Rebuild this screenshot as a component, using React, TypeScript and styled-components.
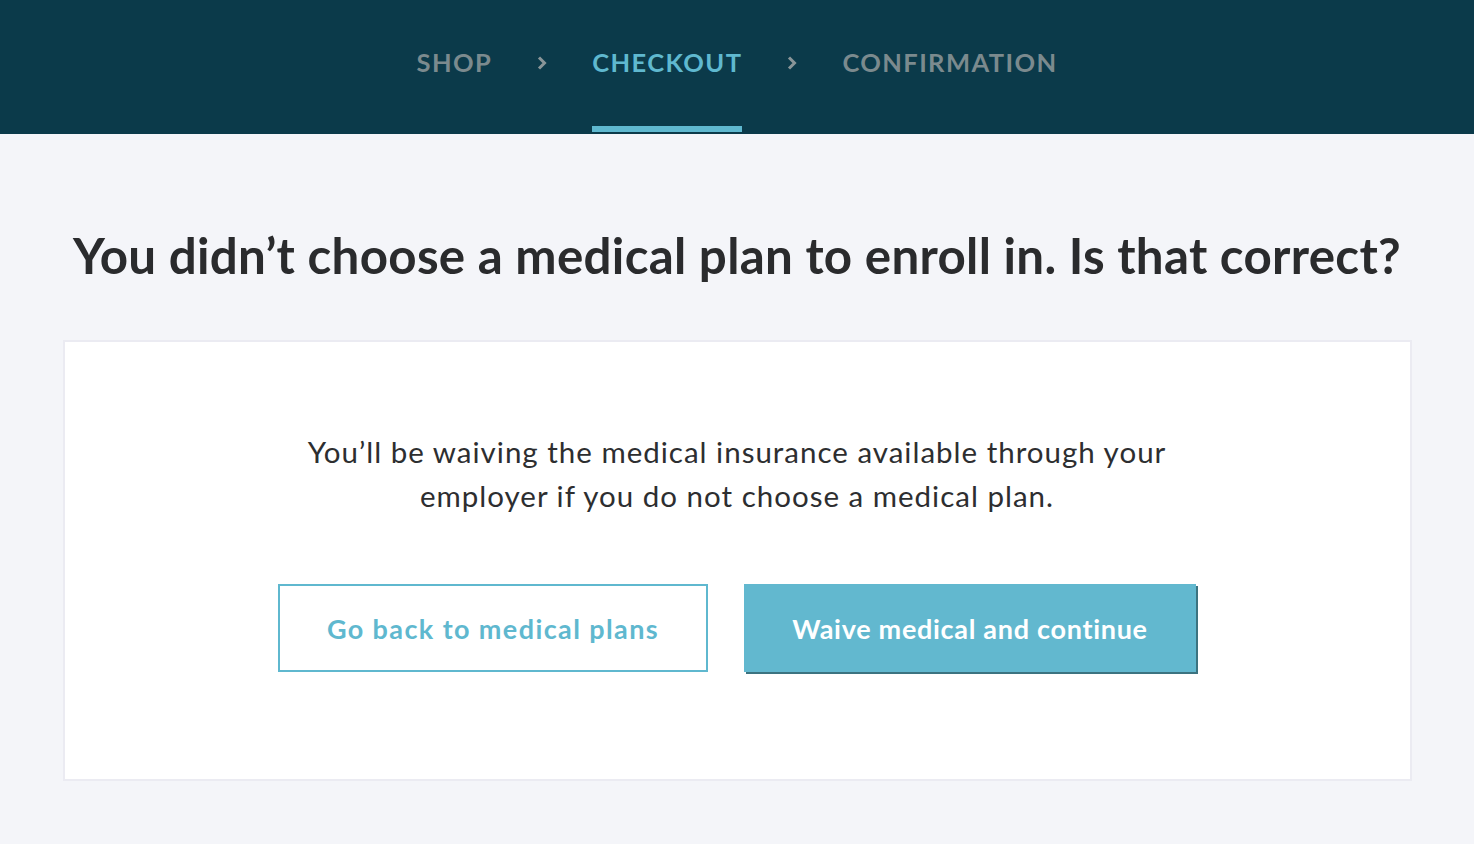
import styled, { createGlobalStyle } from 'styled-components';

const GlobalStyle = createGlobalStyle`
  html, body {
    margin: 0;
    padding: 0;
    background: #f4f5f9;
    font-family: 'Lato', 'Open Sans', sans-serif;
  }
`;

const Page = styled.div`
  min-height: 844px;
  background: #f4f5f9;
`;

const Header = styled.header`
  height: 134px;
  background: #0b3a4a;
  display: flex;
  justify-content: center;
  align-items: stretch;
`;

const Steps = styled.nav`
  display: flex;
  align-items: stretch;
  gap: 45px;
`;

const Step = styled.div<{ $active?: boolean }>`
  display: flex;
  align-items: flex-start;
  padding-top: 47px;
  box-sizing: border-box;
  font-size: 25.5px;
  font-weight: 700;
  letter-spacing: 1.4px;
  color: ${(p) => (p.$active ? '#5fb8cf' : '#7b8a8e')};
  border-bottom: 6px solid ${(p) => (p.$active ? '#5fb8cf' : 'transparent')};
  margin-bottom: 2px;
`;

const Chevron = styled.div`
  display: flex;
  align-items: flex-start;
  padding-top: 55px;
  color: #8a9598;
`;

const Main = styled.main`
  display: flex;
  flex-direction: column;
  align-items: center;
  padding-top: 92px;
`;

const Title = styled.h1`
  margin: 0;
  font-size: 49.3px;
  font-weight: 700;
  color: #2a2b2d;
  letter-spacing: 0.3px;
  line-height: 58px;
`;

const Card = styled.section`
  margin-top: 56px;
  width: 1349px;
  height: 441px;
  box-sizing: border-box;
  background: #fff;
  border: 2px solid #ebebf2;
  display: flex;
  flex-direction: column;
  align-items: center;
  padding-top: 88px;
`;

const Message = styled.p`
  margin: 0;
  width: 900px;
  text-align: center;
  font-size: 29.5px;
  line-height: 44px;
  color: #2d2e30;
  letter-spacing: 1px;
`;

const Actions = styled.div`
  display: flex;
  gap: 36px;
  margin-top: 66px;
`;

const Button = styled.button<{ $primary?: boolean }>`
  height: 88px;
  width: ${(p) => (p.$primary ? '452px' : '430px')};
  box-sizing: border-box;
  font-family: inherit;
  font-size: 27px;
  font-weight: 700;
  letter-spacing: ${(p) => (p.$primary ? '0.7px' : '1.4px')};
  cursor: pointer;
  border: ${(p) => (p.$primary ? 'none' : '2px solid #5fb8cf')};
  background: ${(p) => (p.$primary ? '#62b8cf' : '#fff')};
  color: ${(p) => (p.$primary ? '#fff' : '#5fb8cf')};
  box-shadow: ${(p) => (p.$primary ? '2px 2px 0 #3c7380' : 'none')};
`;

function ChevronIcon() {
  return (
    <svg width="10" height="16" viewBox="0 0 10 16">
      <path d="M2 2.5 L7.5 8 L2 13.5" fill="none" stroke="currentColor" strokeWidth="3" />
    </svg>
  );
}

export default function App() {
  return (
    <Page>
      <GlobalStyle />
      <Header>
        <Steps>
          <Step>SHOP</Step>
          <Chevron>
            <ChevronIcon />
          </Chevron>
          <Step $active>CHECKOUT</Step>
          <Chevron>
            <ChevronIcon />
          </Chevron>
          <Step>CONFIRMATION</Step>
        </Steps>
      </Header>
      <Main>
        <Title>You didn’t choose a medical plan to enroll in. Is that correct?</Title>
        <Card>
          <Message>
            You’ll be waiving the medical insurance available through your employer if you do not
            choose a medical plan.
          </Message>
          <Actions>
            <Button>Go back to medical plans</Button>
            <Button $primary>Waive medical and continue</Button>
          </Actions>
        </Card>
      </Main>
    </Page>
  );
}
